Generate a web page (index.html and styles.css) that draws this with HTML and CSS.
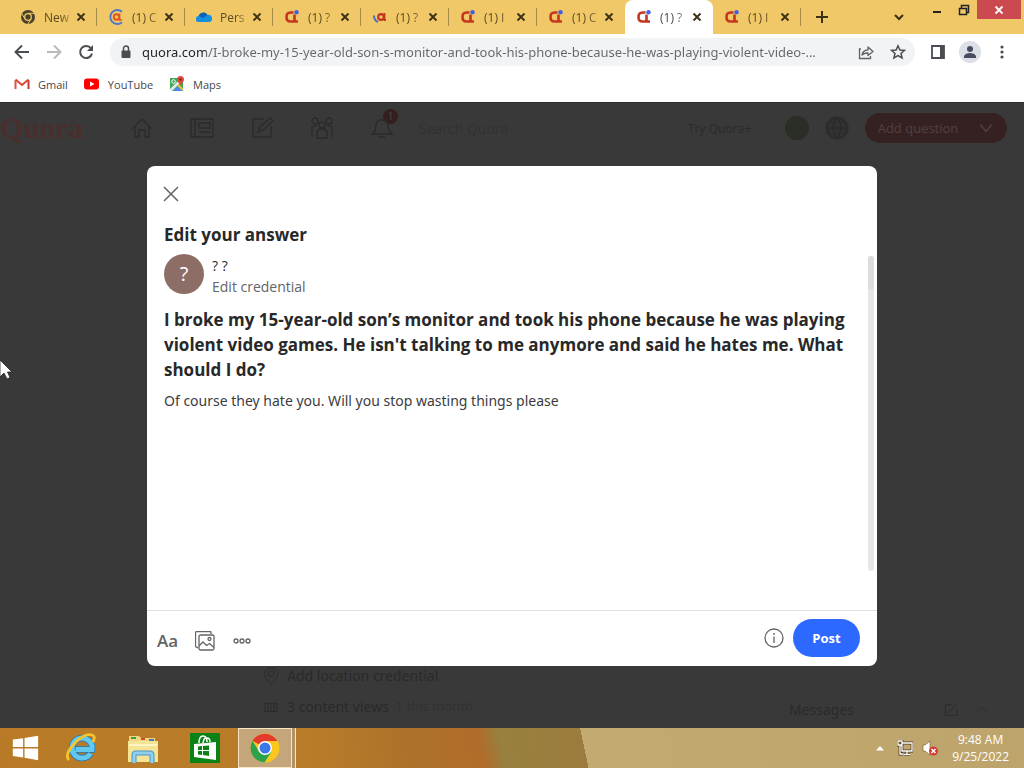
FILE: index.html
```
<!DOCTYPE html>
<html lang="en">
<head>
	<meta charset="utf-8">
	<title>Quora</title>
	<link rel="stylesheet" href="styles.css">
</head>
<body>

<!-- shared icons -->
<svg class="defs">
	<symbol id="q-icon" viewBox="0 0 16 16">
		<path d="M9.500 3.500H6.500Q2.500 3.500 2.500 8t4 4.500h3M10.500 5.500v7H14" fill="none" stroke="#c5361f" stroke-width="2.600"/>
		<circle cx="12.500" cy="3.300" r="2.200" fill="#4460e6"/>
	</symbol>
	<symbol id="x-icon" viewBox="0 0 10 10">
		<path d="M1.500 1.500l7 7M8.500 1.500l-7 7" fill="none" stroke="currentColor" stroke-width="1.900"/>
	</symbol>
</svg>

<!-- tab strip -->
<div class="tabs">
	<div class="tab">
		<svg viewBox="0 0 16 16"><circle cx="8" cy="8" r="7" fill="#4a3f2c"/><circle cx="8" cy="8" r="3.300" fill="#4a3f2c" stroke="#f0c868" stroke-width="1.300"/><path d="M8 4.300h6.300M5 10L1.800 4.700M11 10l-3.200 5" stroke="#f0c868"/></svg>
		<span class="title">New</span>
		<button class="close" aria-label="Close tab"><svg><use href="#x-icon"/></svg></button>
	</div>
	<div class="tab">
		<svg viewBox="0 0 16 16"><path d="M14 2.800A7 7 0 1 0 14 13.200" fill="none" stroke="#4d78c8" stroke-width="1.900"/><circle cx="8.500" cy="8" r="2.700" fill="none" stroke="#e2551f" stroke-width="1.900"/><path d="M11.500 4.500v6.500h2.500" fill="none" stroke="#e2551f" stroke-width="1.700"/></svg>
		<span class="title">(1) C</span>
		<button class="close" aria-label="Close tab"><svg><use href="#x-icon"/></svg></button>
	</div>
	<div class="tab">
		<svg viewBox="0 0 16 16"><path d="M3 13a3 3 0 0 1-.5-6A5 5 0 0 1 11.500 6a3.600 3.600 0 0 1 2 7z" fill="#1490df"/><path d="M2.500 7A5 5 0 0 1 11.500 6L7 9z" fill="#0763b5"/></svg>
		<span class="title">Pers</span>
		<button class="close" aria-label="Close tab"><svg><use href="#x-icon"/></svg></button>
	</div>
	<div class="tab">
		<svg><use href="#q-icon"/></svg>
		<span class="title">(1) ?</span>
		<button class="close" aria-label="Close tab"><svg><use href="#x-icon"/></svg></button>
	</div>
	<div class="tab">
		<svg viewBox="0 0 16 16"><circle cx="9" cy="8" r="2.800" fill="none" stroke="#c5361f" stroke-width="2.200"/><path d="M12.500 4v7H14" fill="none" stroke="#c5361f" stroke-width="1.800"/><path d="M2 6.500q0 5 4 6.500" fill="none" stroke="#3f74c9" stroke-width="2"/></svg>
		<span class="title">(1) ?</span>
		<button class="close" aria-label="Close tab"><svg><use href="#x-icon"/></svg></button>
	</div>
	<div class="tab">
		<svg><use href="#q-icon"/></svg>
		<span class="title">(1) I</span>
		<button class="close" aria-label="Close tab"><svg><use href="#x-icon"/></svg></button>
	</div>
	<div class="tab before">
		<svg><use href="#q-icon"/></svg>
		<span class="title">(1) C</span>
		<button class="close" aria-label="Close tab"><svg><use href="#x-icon"/></svg></button>
	</div>
	<div class="tab active">
		<svg><use href="#q-icon"/></svg>
		<span class="title">(1) ?</span>
		<button class="close" aria-label="Close tab"><svg><use href="#x-icon"/></svg></button>
	</div>
	<div class="tab">
		<svg><use href="#q-icon"/></svg>
		<span class="title">(1) I</span>
		<button class="close" aria-label="Close tab"><svg><use href="#x-icon"/></svg></button>
	</div>
	<button class="newtab" aria-label="New tab"><svg viewBox="0 0 14 14"><path d="M7 1v12M1 7h12" stroke="#3b2f14" stroke-width="2"/></svg></button>
	<button class="tabsearch" aria-label="Search tabs"><svg viewBox="0 0 14 14"><path d="M3 5l4 4 4-4" fill="none" stroke="#3b2f14" stroke-width="2"/></svg></button>
	<div class="winbuttons">
		<button aria-label="Minimize"><svg viewBox="0 0 14 14"><path d="M3 9h8" stroke="#222" stroke-width="2"/></svg></button>
		<button aria-label="Restore"><svg viewBox="0 0 14 14"><path d="M2.500 5.500h7v6h-7zM4.500 5V2.500h7v7H10" fill="none" stroke="#222" stroke-width="1.500"/></svg></button>
		<button class="winclose" aria-label="Close"><svg viewBox="0 0 14 14"><path d="M3.500 3.500l7 7M10.500 3.500l-7 7" stroke="#fff" stroke-width="1.800"/></svg></button>
	</div>
</div>

<!-- address bar -->
<div class="toolbar">
	<button aria-label="Back"><svg viewBox="0 0 16 16"><path d="M15 8H2M8 1.500L1.500 8 8 14.500" fill="none" stroke="#4a4d51" stroke-width="1.900"/></svg></button>
	<button aria-label="Forward"><svg viewBox="0 0 16 16"><path d="M1 8h13M8 1.500L14.500 8 8 14.500" fill="none" stroke="#b8babd" stroke-width="1.900"/></svg></button>
	<button aria-label="Reload"><svg viewBox="0 0 16 16"><path d="M13 4.500A6 6 0 1 0 14 9.500" fill="none" stroke="#4a4d51" stroke-width="2"/><path d="M15 1v6H9z" fill="#4a4d51"/></svg></button>
	<div class="omnibox">
		<svg class="lock" viewBox="0 0 12 14"><rect x="1.500" y="5.500" width="9" height="7.500" rx="1" fill="#4a4d51"/><path d="M3.500 6V3.500a2.500 2.500 0 0 1 5 0V6" fill="none" stroke="#4a4d51" stroke-width="1.500"/></svg>
		<input type="text" class="url" aria-label="Address" value="quora.com/I-broke-my-15-year-old-son-s-monitor-and-took-his-phone-because-he-was-playing-violent-video-...">
		<button aria-label="Share"><svg viewBox="0 0 16 16"><path d="M3 5H1.500v9.500h11V12" fill="none" stroke="#5f6368" stroke-width="1.300"/><path d="M4 11q1-5 6-5V3l5 4.500-5 4V9q-4-.2-6 2z" fill="none" stroke="#5f6368" stroke-width="1.300" stroke-linejoin="round"/></svg></button>
		<button aria-label="Bookmark this tab"><svg viewBox="0 0 16 16"><path d="M8 1.800l1.900 4.200 4.600.4-3.500 3 1.100 4.500L8 11.500l-4.100 2.400L5 9.400l-3.500-3L6.100 6z" fill="none" stroke="#4a4d51" stroke-width="1.500"/></svg></button>
	</div>
	<button aria-label="Side panel"><svg viewBox="0 0 16 16"><path d="M2 2h12v12H2z" fill="none" stroke="#4a4d51" stroke-width="1.800"/><path d="M10 2h4v12h-4z" fill="#4a4d51"/></svg></button>
	<button class="profile" aria-label="Profile"><svg viewBox="0 0 16 16"><circle cx="8" cy="5" r="3" fill="#474c61"/><path d="M2 14v-2q1.500-3 6-3t6 3v2z" fill="#474c61"/></svg></button>
	<button aria-label="Menu"><svg viewBox="0 0 16 16" fill="#4a4d51"><circle cx="8" cy="3" r="1.600"/><circle cx="8" cy="8" r="1.600"/><circle cx="8" cy="13" r="1.600"/></svg></button>
</div>

<div class="bookmarks">
	<a href="#"><svg viewBox="0 0 16 16"><path d="M1.500 13V4" stroke="#dc5148" stroke-width="2"/><path d="M14.500 13V4" stroke="#c9392f" stroke-width="2"/><path d="M1.500 3.500L8 9l6.500-5.500" fill="none" stroke="#e04437" stroke-width="2"/></svg>Gmail</a>
	<a href="#"><svg viewBox="0 0 16 16"><rect x="0" y="2.500" width="15" height="11" rx="3" fill="#f00"/><path d="M6 5.500v5L10.500 8z" fill="#fff"/></svg>YouTube</a>
	<a href="#"><svg viewBox="0 0 16 16"><path d="M1 2h13v13H1z" fill="#3fa757"/><path d="M4 15l6-6 4 5v1z" fill="#4a89f3"/><path d="M1 13L12 2l2 2L3 15H1z" fill="#e8e8e8"/><path d="M9 9l5 5" stroke="#f2c037" stroke-width="2"/><path d="M11.500 9Q8 5.500 8 3.500a3.500 3.500 0 0 1 7 0Q15 5.500 11.500 9z" fill="#dd4b3e"/><circle cx="11.500" cy="3.500" r="1.200" fill="#7d1f18"/><circle cx="4.500" cy="5.500" r="1.800" fill="none" stroke="#fff"/></svg>Maps</a>
</div>

<!-- quora page behind the dialog -->
<div class="page">
	<div class="nav">
		<a href="#" class="logo">Quora</a>
		<div class="navicons">
			<svg viewBox="0 0 24 24"><path d="M2 13L12 3l10 10M5 11v10h4v-7h6v7h4V11"/></svg>
			<svg viewBox="0 0 24 24"><path d="M1 3h22v18H1zM5 3v18M9 7h11v5H9zM9 16h11"/></svg>
			<svg viewBox="0 0 24 24"><path d="M14 3H3v18h18V10M8 16l2-5L20 2l3 3-10 9z"/></svg>
			<svg viewBox="0 0 24 24"><circle cx="5" cy="5" r="3"/><circle cx="19" cy="5" r="3"/><circle cx="12" cy="9" r="3"/><path d="M2 21V11l5-2M22 21V11l-5-2M7 22v-5q0-4 5-4t5 4v5z"/></svg>
			<div class="bell">
				<svg viewBox="0 0 24 24"><path d="M2 18q4-3 4-9 0-5 6-5t6 5q0 6 4 9zM9 21h6"/></svg>
				<span class="badge">1</span>
			</div>
		</div>
		<input type="text" class="search" aria-label="Search" placeholder="Search Quora">
		<button class="try">Try Quora+</button>
		<span class="dot green"></span>
		<span class="dot globe"><svg viewBox="0 0 24 24"><circle cx="12" cy="12" r="10"/><path d="M2 12h20M12 2q-8 10 0 20M12 2q8 10 0 20"/></svg></span>
		<button class="add">Add question <svg viewBox="0 0 14 14"><path d="M2 4l5 6 5-6"/></svg></button>
	</div>
	<div class="behind">
		<div class="creds">
			<p><svg viewBox="0 0 24 24"><path d="M12 23Q3 14 3 9a9 8 0 0 1 18 0q0 5-9 14z"/><circle cx="12" cy="9" r="4"/></svg>Add location credential</p>
			<p><svg viewBox="0 0 24 24"><path d="M4 7h16v11H4zM8 7v11M12 7v11M16 7v11"/></svg>3 content views <small>1 this month</small></p>
		</div>
		<div class="messages"><span>Messages</span><svg viewBox="0 0 24 24"><path d="M13 4H2v16h18v-9M7 15L20 3"/></svg><svg viewBox="0 0 24 24"><path d="M5 15l7-7 7 7"/></svg></div>
	</div>

	<div class="overlay">
		<div class="dialog" role="dialog" aria-labelledby="dialog-title">
			<button class="dismiss" aria-label="Close"><svg viewBox="0 0 16 16"><path d="M1 1l14 14M15 1L1 15" stroke="#636466" stroke-width="1.500"/></svg></button>
			<h1 id="dialog-title">Edit your answer</h1>
			<div class="scroll">
				<div class="content">
					<div class="author">
						<span class="avatar">?</span>
						<div>
							<div class="name">? ?</div>
							<button class="credential">Edit credential</button>
						</div>
					</div>
					<h2>I broke my 15-year-old son’s monitor and took his phone because he was playing violent video games. He isn't talking to me anymore and said he hates me. What should I do?</h2>
					<textarea class="answer" aria-label="Your answer">Of course they hate you. Will you stop wasting things please</textarea>
				</div>
				<div class="track"><div class="thumb"></div></div>
			</div>
			<div class="footer">
				<div class="tools">
					<button class="format">Aa</button>
					<button aria-label="Add image"><svg viewBox="0 0 20 20"><path d="M16 3V1.500q0-1-1-1H2q-1.500 0-1.500 1.500v13q0 1 1.500 1.500h1"/><rect x="4" y="4" width="15" height="15" rx="1.500"/><path d="M4 15l4-4 3.500 3.500 3-2 4.500 4"/><circle cx="14.500" cy="8" r="1.500"/></svg></button>
					<button aria-label="More"><svg viewBox="0 0 20 20"><circle cx="4" cy="10" r="2"/><circle cx="10" cy="10" r="2"/><circle cx="16" cy="10" r="2"/></svg></button>
				</div>
				<button class="info" aria-label="Info"><svg viewBox="0 0 20 20"><circle cx="10" cy="10" r="9"/><path d="M10 8.500V15M10 5v2"/></svg></button>
				<button class="post">Post</button>
			</div>
		</div>
	</div>
	<svg class="cursor" viewBox="0 0 12 20"><path d="M0 0v17l4-4 3 6 3-1.500L7.500 12H12z" fill="#fff" stroke="#222" stroke-width=".8"/></svg>
</div>

<!-- windows taskbar -->
<div class="taskbar">
	<button class="app" aria-label="Start"><svg viewBox="0 0 32 32"><path d="M3 7l11-1.500V15H3zM15.500 5.300L30 3v12H15.500zM3 16.500h11V26L3 24.500zM15.500 16.500H30V29l-14.500-2.500z" fill="#fff"/></svg></button>
	<button class="app" aria-label="Internet Explorer"><svg viewBox="0 0 32 32"><path d="M25.500 21.500A10 10 0 1 1 27 17.500H10.500" fill="none" stroke="#1e78b4" stroke-width="6.500"/><path d="M25.500 21.500A10 10 0 1 1 27 17.500H10.500" fill="none" stroke="#61c9f0" stroke-width="5"/><path d="M4 28Q-1 23 9 12T27 3q4 1 1 7" fill="none" stroke="#f5c32c" stroke-width="2.800"/></svg></button>
	<button class="app" aria-label="File Explorer"><svg viewBox="0 0 32 32"><path d="M2 4h10l2 2h14v4H2z" fill="#f1d782"/><path d="M4 5h5v2H4z" fill="#35a047"/><path d="M14 6h4v2h-4z" fill="#d9452e"/><path d="M22 7h5v2h-5z" fill="#4a78b8"/><path d="M1 9h30v21H1z" fill="#f5e396"/><path d="M2 13h28" stroke="#fff5c4" stroke-width="2"/><path d="M7 31v-8q0-2 2-2h14q2 0 2 2v8" fill="none" stroke="#4c96c8" stroke-width="5"/><path d="M7 31v-8q0-2 2-2h14q2 0 2 2v8" fill="none" stroke="#8fd0ee" stroke-width="3"/></svg></button>
	<button class="app" aria-label="Store"><svg viewBox="0 0 32 32"><path d="M1 1h30v30H1z" fill="#0b8215"/><path d="M5 12l22-2v18L5 25z" fill="#fff"/><path d="M10 11q0-7 4-7t4 6M14 11q1-6 4-5 3 0 3 4" fill="none" stroke="#fff" stroke-width="1.500"/><path d="M9 14.500l4-.5v4H9zM14 14l6-.5V18h-6zM9 19h4v4l-4-.5zM14 19h6v5l-6-1z" fill="#0b8215"/></svg></button>
	<button class="app open" aria-label="Chrome"><svg viewBox="0 0 32 32"><circle cx="16" cy="16" r="14.500" fill="#fbc61d"/><path d="M16 16L3.500 8.700A14.500 14.500 0 0 1 28.500 9H16z" fill="#e33b2e"/><path d="M3.500 8.700a14.500 14.500 0 0 0 12 21.800l7-11L10 19.500z" fill="#2da24c"/><circle cx="16" cy="16" r="7" fill="#fff"/><circle cx="16" cy="16" r="5.500" fill="#3a78e8"/></svg></button>
	<div class="tray">
		<svg viewBox="0 0 16 16"><path d="M4 10.500h8L8 6z" fill="#fff"/></svg>
		<svg viewBox="0 0 16 16"><path d="M5 3h10v8H5zM7 14.500h6M10 11v3M1 1h4v4H1zM3 5v9h3" fill="none" stroke="#4d3d1e" stroke-width="2.800"/><path d="M5 3h10v8H5zM7 14.500h6M10 11v3M1 1h4v4H1zM3 5v9h3" fill="none" stroke="#fff" stroke-width="1.300"/></svg>
		<svg viewBox="0 0 16 16"><path d="M1 5h2l5-4v14l-5-4H1z" fill="#fff" stroke="#6b5630" stroke-width=".6"/><circle cx="11.500" cy="11" r="4.500" fill="#d43a2f"/><path d="M9.500 9l4 4M13.500 9l-4 4" stroke="#fff" stroke-width="1.500"/></svg>
		<div class="clock">9:48 AM<br>9/25/2022</div>
	</div>
</div>

</body>
</html>
```

FILE: styles.css
```
* {
  box-sizing: border-box;
}

body {
  margin: 0;
  height: 100vh;
  display: flex;
  flex-direction: column;
  overflow: hidden;
  font-family: "Open Sans", "Noto Sans", sans-serif;
  font-size: 14px;
  color: #282829;
  background: #fff;
}

button {
  border: none;
  background: none;
  padding: 0;
  font: inherit;
  color: inherit;
  display: flex;
  align-items: center;
  justify-content: center;
  flex: none;
}

svg {
  display: block;
  flex: none;
  width: 16px;
  height: 16px;
}

.defs {
  display: none;
}

/* Tab strip */
.tabs {
  display: flex;
  height: 34px;
  flex: none;
  padding-left: 9px;
  background: #f0c868;
}

.tab {
  width: 88px;
  height: 34px;
  display: flex;
  align-items: center;
  padding: 0 11px;
  font-size: 12px;
  color: #5c4a20;
  background: linear-gradient(#a58a48, #a58a48) right center / 1px 18px no-repeat;
}

.tab.before {
  background: none;
}

.tab.active {
  background: #fff;
  border-radius: 8px 8px 0 0;
  color: #45484c;
}

.tab .title {
  flex: 1;
  margin-left: 8px;
  white-space: nowrap;
  -webkit-mask-image: linear-gradient(to right, #000 50%, transparent);
  mask-image: linear-gradient(to right, #000 50%, transparent);
}

.close svg {
  width: 10px;
  height: 10px;
  color: #3b2f14;
}

.newtab {
  width: 42px;
}

.newtab svg, .tabsearch svg {
  width: 14px;
  height: 14px;
}

.tabsearch {
  width: 28px;
  margin-left: auto;
}

.winbuttons {
  display: flex;
  height: 19px;
  margin-left: 10px;
  margin-right: 3px;
}

.winbuttons button {
  width: 27px;
}

.winbuttons svg {
  width: 14px;
  height: 14px;
}

.winbuttons .winclose {
  width: 44px;
  background: #cb4a50;
}

/* Toolbar */
.toolbar {
  display: flex;
  align-items: center;
  gap: 16px;
  height: 36px;
  flex: none;
  padding: 0 14px;
}

.omnibox {
  flex: 1;
  min-width: 0;
  display: flex;
  align-items: center;
  gap: 16px;
  height: 28px;
  margin-right: -1px;
  padding: 0 9px;
  border-radius: 14px;
  background: #f1f3f4;
}

.lock {
  width: 12px;
  height: 14px;
  margin-left: 1px;
  margin-right: -6px;
}

.url {
  flex: 1;
  min-width: 0;
  border: none;
  padding: 0;
  outline: none;
  font: 13px "Noto Sans", "Open Sans", sans-serif;
  /* the domain is darker than the path */
  color: transparent;
  background: linear-gradient(to right, #202124 64px, #63676b 64px);
  -webkit-background-clip: text;
  background-clip: text;
}

.profile {
  width: 22px;
  height: 22px;
  margin: 0 -3px;
  border-radius: 50%;
  background: #dcdfe8;
}

.bookmarks {
  display: flex;
  align-items: center;
  gap: 16px;
  height: 32px;
  flex: none;
  padding: 0 14px 4px;
}

.bookmarks a {
  display: flex;
  align-items: center;
  gap: 8px;
  font-size: 11px;
  color: #45484c;
  text-decoration: none;
}

/* Page */
.page {
  flex: 1;
  min-height: 0;
  display: flex;
  flex-direction: column;
  position: relative;
  background: #393939;
  border-top: 1px solid #2c2c2c;
  color: #2a2a2a;
}

.page svg {
  fill: none;
  stroke: currentColor;
  stroke-width: 1.3;
}

.nav {
  display: flex;
  align-items: center;
  height: 50px;
}

.logo {
  width: 130px;
  font: bold 30px/40px "Liberation Serif", serif;
  color: #4a2e2c;
  text-decoration: none;
}

.navicons {
  display: flex;
  gap: 36px;
}

.navicons svg {
  width: 24px;
  height: 24px;
}

.bell {
  position: relative;
}

.badge {
  position: absolute;
  top: -7px;
  right: -4px;
  width: 15px;
  height: 15px;
  border-radius: 50%;
  font-size: 10px;
  line-height: 15px;
  text-align: center;
  background: #341f1f;
  color: #4c4444;
}

.search {
  flex: 1;
  min-width: 0;
  margin-left: 25px;
  border: none;
  padding: 0;
  font: 14px "Open Sans", sans-serif;
  background: none;
}

.search::placeholder {
  color: #323232;
}

.try {
  font-size: 12px;
  margin-right: 34px;
}

.dot {
  width: 24px;
  height: 24px;
  border-radius: 50%;
  margin-right: 16px;
  flex: none;
}

.green {
  background: #2b2d27;
}

.globe {
  background: #313234;
}

.globe svg {
  width: 24px;
  height: 24px;
}

.add {
  width: 142px;
  height: 30px;
  gap: 20px;
  margin-right: 17px;
  border-radius: 15px;
  font-size: 13px;
  background: #352121;
  color: #504242;
}

.behind {
  margin-top: auto;
  display: flex;
  justify-content: space-between;
  align-items: flex-end;
  padding: 0 34px 6px 262px;
  font-family: "Noto Sans", sans-serif;
}

.creds p {
  display: flex;
  align-items: center;
  gap: 7px;
  margin: 0;
  line-height: 31px;
}

.creds small {
  font-size: 13px;
  color: #313131;
}

.creds svg {
  width: 18px;
  height: 18px;
}

.messages {
  display: flex;
  align-items: center;
  gap: 14px;
  line-height: 24px;
}

.messages span {
  margin-right: 76px;
}

/* The dialog */
.overlay {
  position: absolute;
  inset: 0;
  display: grid;
  place-items: center;
}

.dialog {
  width: 730px;
  max-width: 90%;
  height: 80%;
  display: flex;
  flex-direction: column;
  border-radius: 8px;
  background: #fff;
  color: #282829;
}

.dismiss {
  width: 16px;
  height: 16px;
  margin: 20px 16px;
}

.dialog h1, .dialog h2 {
  margin: 0;
  font-size: 17px;
  line-height: 25px;
  font-weight: bold;
}

.dialog h1 {
  padding: 0 17px;
  margin-bottom: 7px;
}

.scroll {
  flex: 1;
  min-height: 0;
  display: flex;
}

.content {
  flex: 1;
  min-width: 0;
  display: flex;
  flex-direction: column;
  padding-left: 17px;
}

.author {
  display: flex;
  gap: 8px;
  line-height: 21px;
  margin-bottom: 10px;
}

.name {
  padding-top: 1px;
}

.avatar {
  width: 40px;
  height: 40px;
  border-radius: 50%;
  font-size: 20px;
  line-height: 40px;
  text-align: center;
  background: #8d6e66;
  color: #fff;
}

.credential {
  color: #636466;
}

.answer {
  flex: 1;
  border: none;
  padding: 0;
  margin-top: 8px;
  outline: none;
  resize: none;
  font: 14px/21px "Noto Sans", "Open Sans", sans-serif;
  color: #3c3c3e;
}

.track {
  width: 6px;
  margin: 2px 3px 39px 7px;
  border-radius: 3px;
  background: #e6e6e7;
}

.thumb {
  height: 34px;
  border-radius: 3px;
  background: #dcdcde;
}

.footer {
  display: flex;
  align-items: center;
  height: 56px;
  flex: none;
  padding: 0 17px 0 10px;
  gap: 9px;
  border-top: 1px solid #dee0e1;
  color: #636466;
}

.footer svg {
  width: 20px;
  height: 20px;
}

.tools {
  display: flex;
  align-items: center;
  gap: 17px;
  padding-top: 5px;
}

.format {
  font-size: 17px;
  font-weight: 600;
}

.info {
  margin-left: auto;
}

.post {
  width: 67px;
  height: 38px;
  border-radius: 19px;
  font-size: 13px;
  font-weight: bold;
  background: #2e69ff;
  color: #fff;
}

/* Mouse pointer */
.page .cursor {
  position: absolute;
  left: 0;
  top: 257px;
  width: 12px;
  height: 20px;
}

/* Taskbar */
.taskbar {
  display: flex;
  align-items: center;
  height: 40px;
  flex: none;
  background: linear-gradient(78deg, #b87a26 0, #b97d29 30%, #ad722a 40%, #b06c2a 47%, #98803f 49%, #9c7c3e 57%, #c2aa70 57%, #bda46c 100%);
}

.app {
  width: 58px;
  height: 40px;
  margin-right: 4px;
}

.app:first-child {
  width: 50px;
  margin-right: 2px;
}

.app svg {
  width: 32px;
  height: 32px;
}

.app:first-child svg {
  width: 30px;
  height: 30px;
}

.app.open {
  width: 54px;
  border: 1px solid #f6e6c6;
  box-shadow: 3px 0 #b0936a, 4px 0 #f6e6c6;
  background: #c4a67a;
}

.tray {
  display: flex;
  align-items: center;
  gap: 9px;
  margin-left: auto;
  padding-right: 15px;
}

.clock {
  margin-left: 5px;
  font-size: 12px;
  line-height: 17px;
  text-align: center;
  color: #fff;
}
```
